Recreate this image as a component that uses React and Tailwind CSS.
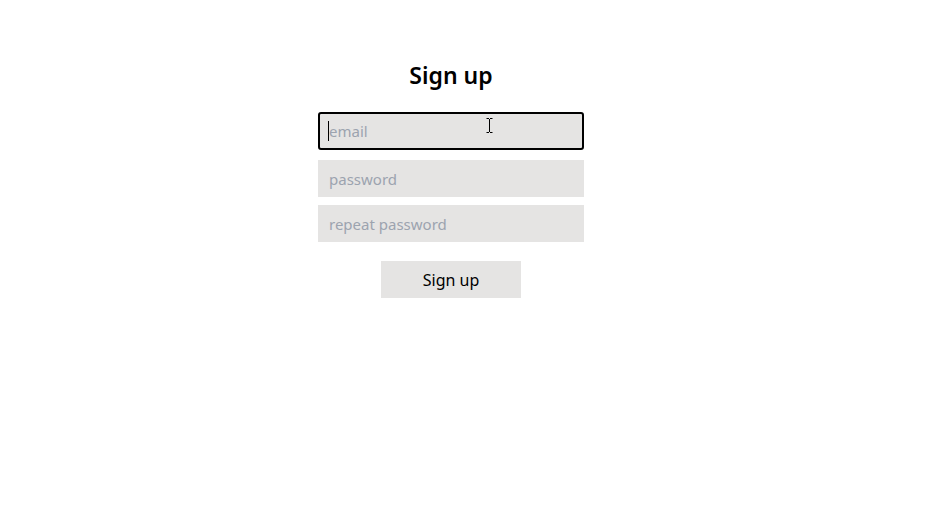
import { useState } from 'react';

const inputCls =
  'w-full h-[37px] px-[11px] bg-[#e5e4e3] text-[15px] text-gray-900 placeholder:text-[#9ca3af] outline-none';

const App = () => {
  const [email, setEmail] = useState('');
  const [password, setPassword] = useState('');
  const [repeat, setRepeat] = useState('');

  return (
    <div className="min-h-screen bg-white pr-[40px] font-['Noto_Sans',sans-serif] text-black">
      <div className="mx-auto w-[266px] pt-[59px] flex flex-col items-center">
        <h1 className="text-[23px] font-semibold leading-[32px] mb-[21px]">Sign up</h1>

        {/* focused email field */}
        <div className="relative w-full">
          <input
            type="email"
            placeholder="email"
            value={email}
            onChange={(e) => setEmail(e.target.value)}
            className={`${inputCls} h-[38px] border-2 border-black rounded-[3px] pl-[9px]`}
          />
          <span className="absolute left-[10px] top-[9px] h-[20px] w-px bg-black" />
          {/* mouse I-beam */}
          <svg
            className="absolute left-[168px] top-[6px]"
            width="7"
            height="15"
            viewBox="0 0 7 15"
            fill="none"
            stroke="black"
            strokeWidth="1"
          >
            <path d="M0.5 0.5h2.5M4 0.5h2.5M3.5 1v13M0.5 14.5h2.5M4 14.5h2.5" />
          </svg>
        </div>

        <input
          type="password"
          placeholder="password"
          value={password}
          onChange={(e) => setPassword(e.target.value)}
          className={`${inputCls} mt-[10px]`}
        />
        <input
          type="password"
          placeholder="repeat password"
          value={repeat}
          onChange={(e) => setRepeat(e.target.value)}
          className={`${inputCls} mt-2`}
        />

        <button className="mt-[19px] w-[140px] h-[37px] bg-[#e5e4e3] text-base text-black">
          Sign up
        </button>
      </div>
    </div>
  );
};

export default App;
